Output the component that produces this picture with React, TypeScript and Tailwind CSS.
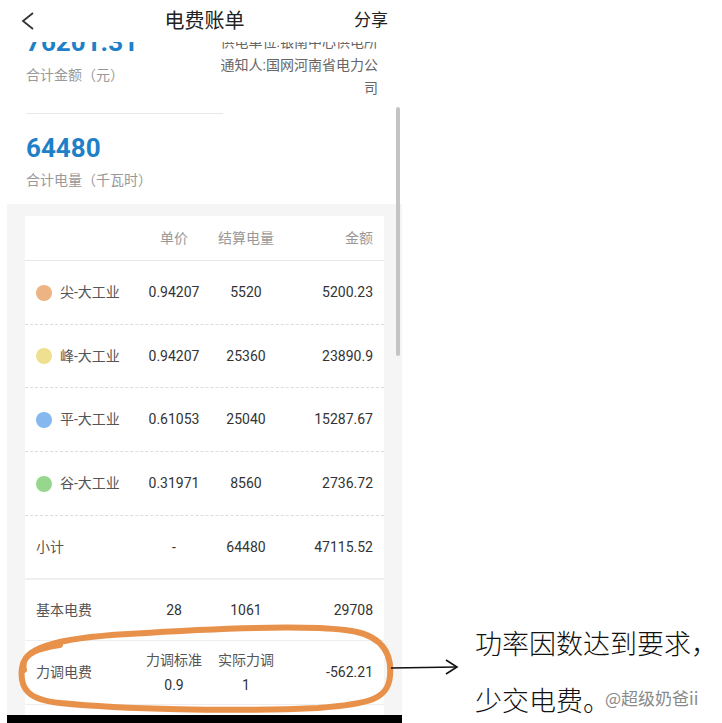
import React from "react";

type Row = {
  dot?: string;
  label: string;
  price: React.ReactNode;
  qty: React.ReactNode;
  amount: string;
  h: string;
  border: string;
};

const rows: Row[] = [
  { dot: "bg-[#ecb383]", label: "尖-大工业", price: "0.94207", qty: "5520", amount: "5200.23", h: "h-[64px]", border: "border-b border-dashed border-[#dcdcdc]" },
  { dot: "bg-[#efe08f]", label: "峰-大工业", price: "0.94207", qty: "25360", amount: "23890.9", h: "h-[63px]", border: "border-b border-dashed border-[#dcdcdc]" },
  { dot: "bg-[#84b8ee]", label: "平-大工业", price: "0.61053", qty: "25040", amount: "15287.67", h: "h-[64px]", border: "border-b border-dashed border-[#dcdcdc]" },
  { dot: "bg-[#96d68d]", label: "谷-大工业", price: "0.31971", qty: "8560", amount: "2736.72", h: "h-[64px]", border: "border-b border-dashed border-[#dcdcdc]" },
  { label: "小计", price: "-", qty: "64480", amount: "47115.52", h: "h-[62px]", border: "" },
];

function TableRow({ row }: { row: Row }) {
  return (
    <div className={`flex items-center px-[11px] text-[14px] ${row.h} ${row.border}`}>
      <div className="flex w-[102px] items-center">
        {row.dot && <span className={`mr-[8px] h-[16px] w-[16px] rounded-full ${row.dot}`} />}
        <span className="text-[#555]">{row.label}</span>
      </div>
      <div className="w-[72px] text-center text-[#333]">{row.price}</div>
      <div className="w-[72px] text-center text-[#333]">{row.qty}</div>
      <div className="flex-1 text-right text-[#333]">{row.amount}</div>
    </div>
  );
}

export default function App() {
  return (
    <div className="relative h-[723px] w-[722px] overflow-hidden bg-white font-['Roboto','Noto_Sans_CJK_SC',sans-serif]">
      <div className="flex h-full">
        {/* phone screen */}
        <div className="relative ml-[7px] flex h-full w-[395px] flex-col">
          <div className="relative z-10 grid h-[42px] shrink-0 grid-cols-[1fr_auto_1fr] items-center bg-white px-[14px]">
            <svg width="14" height="18" viewBox="0 0 14 18" className="shrink-0">
              <polyline points="12,1 2,9 12,17" fill="none" stroke="#333" strokeWidth="1.8" />
            </svg>
            <div className="text-center text-[20px] text-[#222]">电费账单</div>
            <div className="text-right text-[17px] text-[#222]">分享</div>
          </div>

          <div className="-mt-[14px] flex flex-1 flex-col overflow-hidden">
            <div className="px-[19px]">
              <div className="flex justify-between">
                <div className="min-w-0 flex-1">
                  <div className="text-[26px] font-bold leading-[28px] text-[#1e80c8]">76201.31</div>
                  <div className="mt-[9px] text-[14px] leading-[20px] text-[#999]">合计金额（元）</div>
                  <div className="mt-[28px] h-px w-[197px] bg-[#e8e8e8]" />
                </div>
                <div className="mr-[5px] mt-[3px] w-[160px] shrink-0 text-right text-[14px] leading-[23px] text-[#666]">
                  <div className="whitespace-nowrap">供电单位:银南中心供电所</div>
                  <div>通知人:国网河南省电力公司</div>
                </div>
              </div>
              <div className="mt-[20px] text-[26px] font-bold leading-[28px] text-[#1e80c8]">64480</div>
              <div className="mt-[8px] pb-[14px] text-[14px] leading-[20px] text-[#999]">合计电量（千瓦时）</div>
            </div>

            <div className="flex-1 bg-[#f5f5f5] px-[18px] pt-[12px]">
              <div className="bg-white">
                <div className="flex h-[45px] items-center border-b border-[#e6e6e6] px-[11px] text-[14px] text-[#999]">
                  <div className="w-[102px]" />
                  <div className="w-[72px] text-center">单价</div>
                  <div className="w-[72px] text-center">结算电量</div>
                  <div className="flex-1 text-right">金额</div>
                </div>
                {rows.map((r) => (
                  <TableRow key={r.label} row={r} />
                ))}
                <div className="h-[2px] bg-[#efefef]" />
                <div className="flex h-[61px] items-center border-b border-[#eeeeee] px-[11px] text-[14px] text-[#333]">
                  <div className="w-[102px] text-[#555]">基本电费</div>
                  <div className="w-[72px] text-center">28</div>
                  <div className="w-[72px] text-center">1061</div>
                  <div className="flex-1 text-right">29708</div>
                </div>
                <div className="flex h-[64px] items-center border-b border-[#eeeeee] px-[11px] text-[14px] text-[#333]">
                  <div className="w-[102px] text-[#555]">力调电费</div>
                  <div className="w-[72px] text-center leading-[25px]">
                    <div className="text-[#555]">力调标准</div>
                    <div>0.9</div>
                  </div>
                  <div className="w-[72px] text-center leading-[25px]">
                    <div className="text-[#555]">实际力调</div>
                    <div>1</div>
                  </div>
                  <div className="flex-1 text-right">-562.21</div>
                </div>
                <div className="h-[10px]" />
              </div>
            </div>
          </div>

          <div className="h-[8px] shrink-0 bg-black" />

          {/* scrollbar */}
          <div className="absolute left-[389px] top-[107px] h-[249px] w-[4px] rounded-full bg-[#c4c4c4]" />
        </div>

        {/* annotation */}
        <div className="ml-[73px] pt-[625px] font-['Noto_Sans_CJK_SC',sans-serif] text-[27px] font-light text-[#111]">
          <div className="whitespace-nowrap leading-[36px]">功率因数达到要求，</div>
          <div className="relative mt-[21px] whitespace-nowrap leading-[36px]">
            少交电费。
            <span className="absolute left-[130px] top-[6px] whitespace-nowrap text-[17px] font-normal leading-[20px] text-[#8a8a8a] [text-shadow:0_0_2px_#fff]">
              @超级奶爸ii
            </span>
          </div>
        </div>
      </div>

      {/* hand-drawn highlight and arrow */}
      <svg className="pointer-events-none absolute left-0 top-0" width="722" height="723" viewBox="0 0 722 723">
        <path
          d="M 24 670 C 18 648, 58 638, 128 634 C 220 628, 300 625, 345 630 C 384 634, 392 655, 390 676 C 388 700, 368 704, 318 708 C 230 712, 120 709, 60 703 C 30 700, 19 690, 22 668 C 24 652, 40 648, 60 645"
          fill="none"
          stroke="#e8914b"
          strokeWidth="6"
          strokeLinecap="round"
        />
        <line x1="391" y1="668" x2="457" y2="667" stroke="#111" strokeWidth="1.6" />
        <polyline points="446,660 457,667 446,674" fill="none" stroke="#111" strokeWidth="1.6" />
      </svg>
    </div>
  );
}
